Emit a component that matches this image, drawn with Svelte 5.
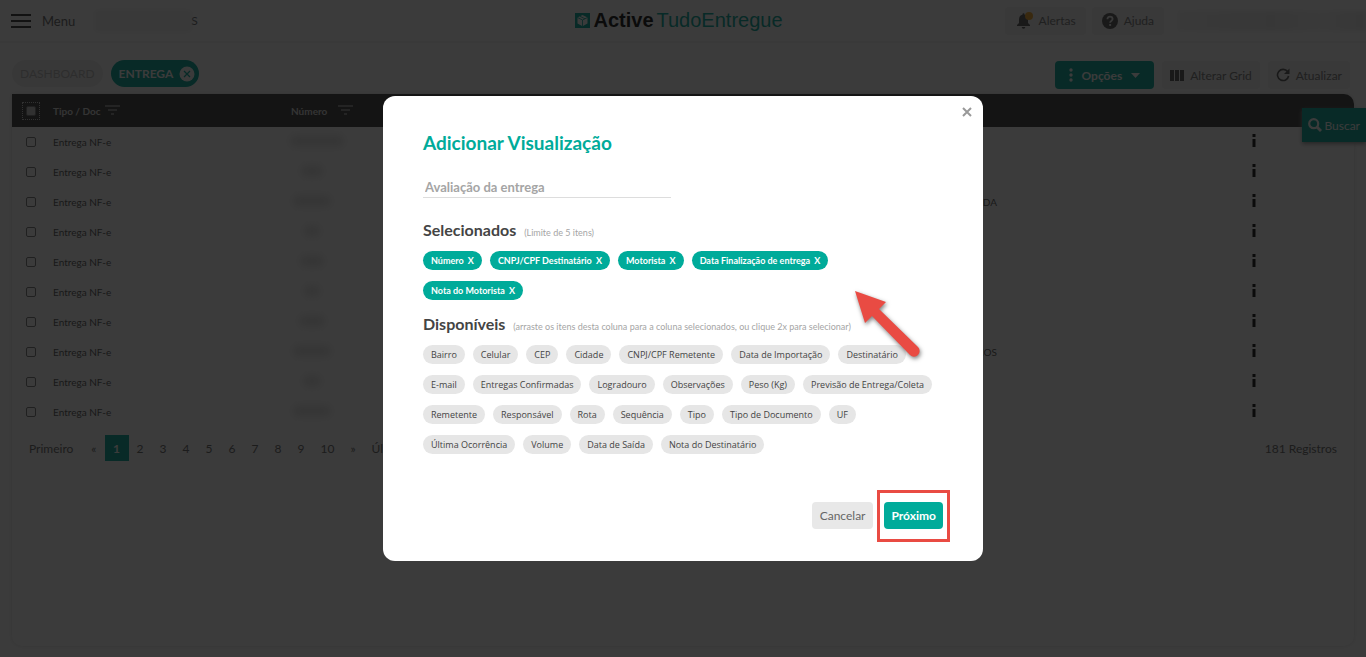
<script lang="ts">
let visualizationName = ""

let selected = ["Número", "CNPJ/CPF Destinatário", "Motorista", "Data Finalização de entrega", "Nota do Motorista"]

let available = [
	"Bairro", "Celular", "CEP", "Cidade", "CNPJ/CPF Remetente", "Data de Importação", "Destinatário",
	"E-mail", "Entregas Confirmadas", "Logradouro", "Observações", "Peso (Kg)", "Previsão de Entrega/Coleta",
	"Remetente", "Responsável", "Rota", "Sequência", "Tipo", "Tipo de Documento", "UF",
	"Última Ocorrência", "Volume", "Data de Saída", "Nota do Destinatário",
]

// `masked` is the width of the blurred document number
const rows = [
	{ masked: 52, client: "" },
	{ masked: 20, client: "" },
	{ masked: 36, client: "DA" },
	{ masked: 14, client: "" },
	{ masked: 22, client: "" },
	{ masked: 14, client: "" },
	{ masked: 24, client: "" },
	{ masked: 36, client: "COS" },
	{ masked: 16, client: "" },
	{ masked: 36, client: "" },
]

const pages = ["1", "2", "3", "4", "5", "6", "7", "8", "9", "10"]
let currentPage = "1"

function select(item: string) {
	available = available.filter(i => i !== item)
	selected = [...selected, item]
}

function unselect(item: string) {
	selected = selected.filter(i => i !== item)
	available = [...available, item]
}
</script>

<div class="page">
	<header class="topbar">
		<div class="side">
			<button class="menu">
				<svg width="20" height="14" viewBox="0 0 20 14"><path d="M0 1h20M0 7h20M0 13h20" stroke="currentColor" stroke-width="2" /></svg>
				Menu
			</button>
			<span class="account"><span class="smudge"></span>S</span>
		</div>
		<a class="logo" href="#inicio">
			<svg width="15" height="15" viewBox="0 0 15 15">
				<rect width="15" height="15" fill="#00a999" />
				<path d="M7.500 2l5 2.500v6l-5 2.800-5-2.800v-6z" fill="#fff" />
				<path d="M2.500 4.500l5 2.500 5-2.500M7.500 7v6M5 3.300l5 2.500" fill="none" stroke="#00a999" stroke-width=".8" />
			</svg>
			<strong>Active</strong>
			<span>TudoEntregue</span>
		</a>
		<div class="side end">
			<button class="soft">
				<svg class="bell" width="18" height="18" viewBox="0 0 18 18">
					<path d="M2 14v-1l2-2V7.500C4 5 5.300 3.300 7.500 2.800V2.200a1 1 0 0 1 2 0v.6C11.700 3.300 13 5 13 7.500V11l2 2v1zM6.700 15h3.600a1.800 1.800 0 0 1-3.600 0z" fill="currentColor" />
					<circle cx="14" cy="4" r="4" fill="#f5a623" />
				</svg>
				Alertas
			</button>
			<button class="soft">
				<svg width="16" height="16" viewBox="0 0 16 16">
					<circle cx="8" cy="8" r="8" fill="currentColor" />
					<path d="M5.400 6.200C5.400 2.600 10.600 2.800 10.600 6c0 1.900-2.500 1.900-2.500 3.700" fill="none" stroke="#eee" stroke-width="1.800" />
					<rect x="7.200" y="11" width="1.900" height="1.900" fill="#eee" />
				</svg>
				Ajuda
			</button>
			<span class="user"></span>
		</div>
	</header>

	<main>
		<div class="toolbar">
			<nav class="tabs">
				<a class="tab" href="#dashboard">DASHBOARD</a>
				<a class="tab active" href="#entrega">
					ENTREGA
					<svg width="16" height="16" viewBox="0 0 16 16">
						<circle cx="8" cy="8" r="7.500" fill="#fff" />
						<path d="M5 5l6 6M11 5l-6 6" stroke="#00a999" stroke-width="1.300" />
					</svg>
				</a>
			</nav>
			<div class="actions">
				<button class="soft primary">
					<svg width="4" height="14" viewBox="0 0 4 14" fill="currentColor"><circle cx="2" cy="2" r="1.700" /><circle cx="2" cy="7" r="1.700" /><circle cx="2" cy="12" r="1.700" /></svg>
					Opções
					<svg width="9" height="5" viewBox="0 0 9 5"><path d="M0 0h9L4.500 5z" fill="currentColor" /></svg>
				</button>
				<button class="soft">
					<svg width="14" height="11" viewBox="0 0 14 11"><path d="M0 0h4v11H0zM5 0h4v11H5zM10 0h4v11h-4z" fill="currentColor" /></svg>
					Alterar Grid
				</button>
				<button class="soft">
					<svg width="14" height="14" viewBox="0 0 14 14">
						<path d="M11.600 3.600A5.600 5.600 0 1 0 12.600 8" fill="none" stroke="currentColor" stroke-width="1.600" />
						<path d="M13.500.5v5.500H8z" fill="currentColor" />
					</svg>
					Atualizar
				</button>
			</div>
		</div>

		<section class="card">
			<table>
				<thead>
					<tr>
						<th class="check"><span class="focus"><input type="checkbox" aria-label="Selecionar todos" /></span></th>
						<th class="type">
							Tipo / Doc
							<svg width="15" height="10" viewBox="0 0 15 10"><path d="M0 1h15M3 5h9M6 9h3" stroke="currentColor" /></svg>
						</th>
						<th class="number">
							Número
							<svg width="15" height="10" viewBox="0 0 15 10"><path d="M0 1h15M3 5h9M6 9h3" stroke="currentColor" /></svg>
						</th>
						<th class="client"></th>
						<th class="info"></th>
					</tr>
				</thead>
				<tbody>
					{#each rows as row}
						<tr>
							<td class="check"><input type="checkbox" aria-label="Selecionar entrega" /></td>
							<td>Entrega NF-e</td>
							<td class="number"><span class="masked" style="width: {row.masked}px"></span></td>
							<td class="client">{row.client}</td>
							<td class="info">
								<button aria-label="Informações">
									<svg width="4" height="13" viewBox="0 0 4 13"><path d="M.5 0h3v3h-3zM.5 5h3v8h-3z" fill="currentColor" /></svg>
								</button>
							</td>
						</tr>
					{/each}
				</tbody>
			</table>
			<footer class="pagination">
				<nav>
					<button class="first">Primeiro</button>
					<button>«</button>
					{#each pages as page}
						<button class="page-number" class:current={page === currentPage} on:click={() => (currentPage = page)}>{page}</button>
					{/each}
					<button>»</button>
					<button>Último</button>
				</nav>
				<span>181 Registros</span>
			</footer>
		</section>
	</main>

	<button class="search">
		<svg width="14" height="14" viewBox="0 0 14 14"><circle cx="5.700" cy="5.700" r="4.500" fill="none" stroke="currentColor" stroke-width="2.200" /><path d="M9 9l4 4" stroke="currentColor" stroke-width="2.800" /></svg>
		Buscar
	</button>
</div>

<div class="backdrop">
	<div class="modal" role="dialog" aria-labelledby="modal-title">
		<button class="close" aria-label="Fechar">
			<svg width="10" height="10" viewBox="0 0 10 10"><path d="M1 1l8 8M9 1l-8 8" stroke="currentColor" stroke-width="2" /></svg>
		</button>
		<h1 id="modal-title">Adicionar Visualização</h1>
		<input class="name" type="text" aria-label="Nome da visualização" placeholder="Avaliação da entrega" bind:value={visualizationName} />

		<h2>Selecionados <small>(Limite de 5 itens)</small></h2>
		<div class="chips">
			{#each selected as item}
				<button class="chip selected" on:click={() => unselect(item)}>{item} <span>X</span></button>
			{/each}
		</div>

		<h2 class="next">Disponíveis <small>(arraste os itens desta coluna para a coluna selecionados, ou clique 2x para selecionar)</small></h2>
		<div class="chips">
			{#each available as item}
				<button class="chip" on:dblclick={() => select(item)}>{item}</button>
			{/each}
		</div>

		<div class="buttons">
			<button class="cancel">Cancelar</button>
			<span class="highlight"><button class="confirm">Próximo</button></span>
		</div>

		<svg class="arrow" width="76" height="76" viewBox="0 0 76 76">
			<path d="M5 5L36 16 29 23 68 61A5 5 0 0 1 60 69L22 30 15 37z" fill="#e94b43" />
		</svg>
	</div>
</div>

<style>
:global(body) {
	margin: 0;
	background: #fff;
	font-family: Lato, "Open Sans", sans-serif;
	font-size: 12px;
	color: #666;
}

button,
input {
	font: inherit;
	color: inherit;
}

button {
	border: 0;
	padding: 0;
	background: none;
	cursor: pointer;
}

svg {
	flex: none;
}

a {
	text-decoration: none;
}

.page {
	display: flex;
	flex-direction: column;
	min-height: 100vh;
	box-sizing: border-box;
	padding-bottom: 11px;
}

.topbar {
	display: flex;
	align-items: center;
	height: 41px;
	padding: 0 19px 0 11px;
	border-bottom: 2px solid #f4f4f4;
}

.side {
	display: flex;
	flex: 1;
	align-items: center;
	gap: 6px;
}

.end {
	justify-content: flex-end;
}

.end .soft {
	padding: 0 10px;
}

.menu {
	display: flex;
	align-items: center;
	gap: 11px;
	margin-right: 14px;
	font-size: 13px;
}

.menu svg {
	color: #333;
}

.account {
	display: flex;
	align-items: center;
}

.smudge {
	width: 96px;
	height: 22px;
	background: #f2f2f2;
	filter: blur(2px);
}

.user {
	width: 188px;
	height: 20px;
	margin-right: -19px;
	margin-left: 8px;
	background: linear-gradient(90deg, #f4f4f4, #ececec 50%, #f6f6f6 75%, #eaeaea);
	filter: blur(2px);
}

.logo {
	display: flex;
	align-items: center;
	gap: 3px;
	font-family: "Liberation Sans", Arial, sans-serif;
	font-size: 20px;
	color: #00a999;
}

.logo strong {
	color: #111;
}

.soft {
	display: flex;
	align-items: center;
	gap: 6px;
	height: 28px;
	padding: 0 8px;
	border-radius: 4px;
	background: #f3f3f3;
	color: #777;
}

.soft svg {
	color: #555;
}

.primary {
	gap: 9px;
	padding: 0 14px;
	background: #00a999;
	color: #fff;
	font-weight: bold;
}

.primary svg {
	color: #fff;
}

main {
	display: flex;
	flex: 1;
	flex-direction: column;
	padding: 17px 12px 0;
}

.toolbar {
	display: flex;
	justify-content: space-between;
	height: 29px;
	margin-bottom: 5px;
}

.tabs,
.actions {
	display: flex;
	align-items: flex-start;
	gap: 8px;
}

.actions {
	align-items: flex-end;
	padding-right: 4px;
}

.tab {
	display: flex;
	align-items: center;
	gap: 6px;
	height: 27px;
	padding: 0 8px;
	border-radius: 14px;
	background: #f0f0f0;
	color: #bbb;
}

.tab.active {
	padding-right: 4px;
	background: #00a999;
	color: #fff;
	font-weight: bold;
}

.card {
	flex: 1;
	border-radius: 0 10px 10px 10px;
	overflow: hidden;
	box-shadow: 0 0 4px #ddd;
}

table {
	width: 100%;
	border-collapse: collapse;
	table-layout: fixed;
	font-size: 10px;
	color: #555;
}

th {
	height: 33px;
	padding: 0;
	background: #3c3c3c;
	color: #ddd;
	text-align: left;
}

th svg {
	margin-left: 2px;
}

.number svg {
	margin-left: 8px;
}

td {
	height: 30px;
	padding: 0;
}

.check {
	width: 41px;
}

.type {
	width: 238px;
}

.number {
	width: 92px;
}

td.number {
	text-align: center;
}

.check input {
	appearance: none;
	display: block;
	width: 10px;
	height: 10px;
	margin: 0 0 0 14px;
	border: 1px solid #777;
	border-radius: 2px;
}

.focus {
	display: block;
	width: 16px;
	margin-left: 10px;
	padding: 3px 0;
	border: 1px dotted #ccc;
}

.focus input {
	margin: 0 0 0 3px;
	background: #ccc;
}

.masked {
	display: inline-block;
	height: 10px;
	margin-right: 50px;
	background: #ddd;
	filter: blur(4px);
}

.client {
	width: 614px;
	text-align: right;
}

.info {
	padding-left: 255px;
	color: #111;
}

.info button {
	display: block;
	margin-bottom: 2px;
}

.pagination {
	display: flex;
	justify-content: space-between;
	align-items: center;
	padding: 8px 17px 8px 9px;
}

.pagination nav {
	display: flex;
}

.pagination button {
	height: 26px;
	padding: 0 8px;
}

.pagination .first {
	padding-right: 10px;
}

.pagination .page-number {
	min-width: 23px;
}

.pagination .current {
	min-width: 24px;
	background: #00a999;
	color: #fff;
	font-weight: bold;
}

.search {
	position: absolute;
	top: 108px;
	right: 0;
	display: flex;
	align-items: center;
	gap: 2px;
	height: 34px;
	padding: 0 6px;
	background: #00a999;
	color: #fff;
	box-shadow: 0 2px 4px #999;
}

.backdrop {
	position: fixed;
	inset: 0;
	display: flex;
	align-items: center;
	justify-content: center;
	background: rgba(10, 10, 10, .8);
}

.modal {
	position: relative;
	box-sizing: border-box;
	width: 600px;
	max-width: 100%;
	padding: 35px 40px 32px;
	border-radius: 12px;
	background: #fff;
}

.close {
	position: absolute;
	top: 11px;
	right: 11px;
	display: flex;
	color: #999;
}

h1 {
	margin: 0 0 21px;
	font-size: 19px;
	line-height: 24px;
	color: #00ab9a;
}

.name {
	display: block;
	box-sizing: border-box;
	width: 248px;
	height: 22px;
	margin-bottom: 22px;
	padding: 0 2px;
	border: 0;
	border-bottom: 1px solid #ddd;
	font-size: 13px;
	font-weight: bold;
	outline: 0;
}

.name::placeholder {
	color: #a5a5a5;
}

h2 {
	margin: 0 0 11px;
	font-size: 16px;
	line-height: 20px;
	color: #444;
}

h2 small {
	margin-left: 4px;
	font-size: 9px;
	line-height: 1;
	font-weight: normal;
	color: #a5a5a5;
}

.next {
	margin-top: 14px;
}

.chips {
	display: flex;
	flex-wrap: wrap;
	gap: 11px 8px;
	padding-right: 8px;
}

.chip {
	height: 19px;
	padding: 0 8px;
	border-radius: 10px;
	background: #e6e6e6;
	color: #444;
	font-family: "Open Sans", sans-serif;
	font-size: 9px;
}

.selected {
	background: #00ab9a;
	color: #fff;
	font-family: Lato, sans-serif;
	font-weight: bold;
}

.selected span {
	margin-left: 2px;
}

.buttons {
	display: flex;
	justify-content: flex-end;
	gap: 11px;
	margin-top: 48px;
}

.buttons button {
	height: 27px;
	padding: 0 8px;
	border-radius: 4px;
}

.cancel {
	background: #e8e8e8;
}

.highlight {
	position: relative;
}

.highlight::after {
	content: "";
	position: absolute;
	inset: -12px -7px -13px;
	border: 3px solid #e94b43;
	pointer-events: none;
}

.buttons .confirm {
	padding: 0 7px;
	background: #00ab9a;
	color: #fff;
	font-weight: bold;
}

.arrow {
	position: absolute;
	top: 190px;
	right: 57px;
	filter: drop-shadow(1px 2px 2px rgba(0, 0, 0, .5));
	pointer-events: none;
}
</style>
